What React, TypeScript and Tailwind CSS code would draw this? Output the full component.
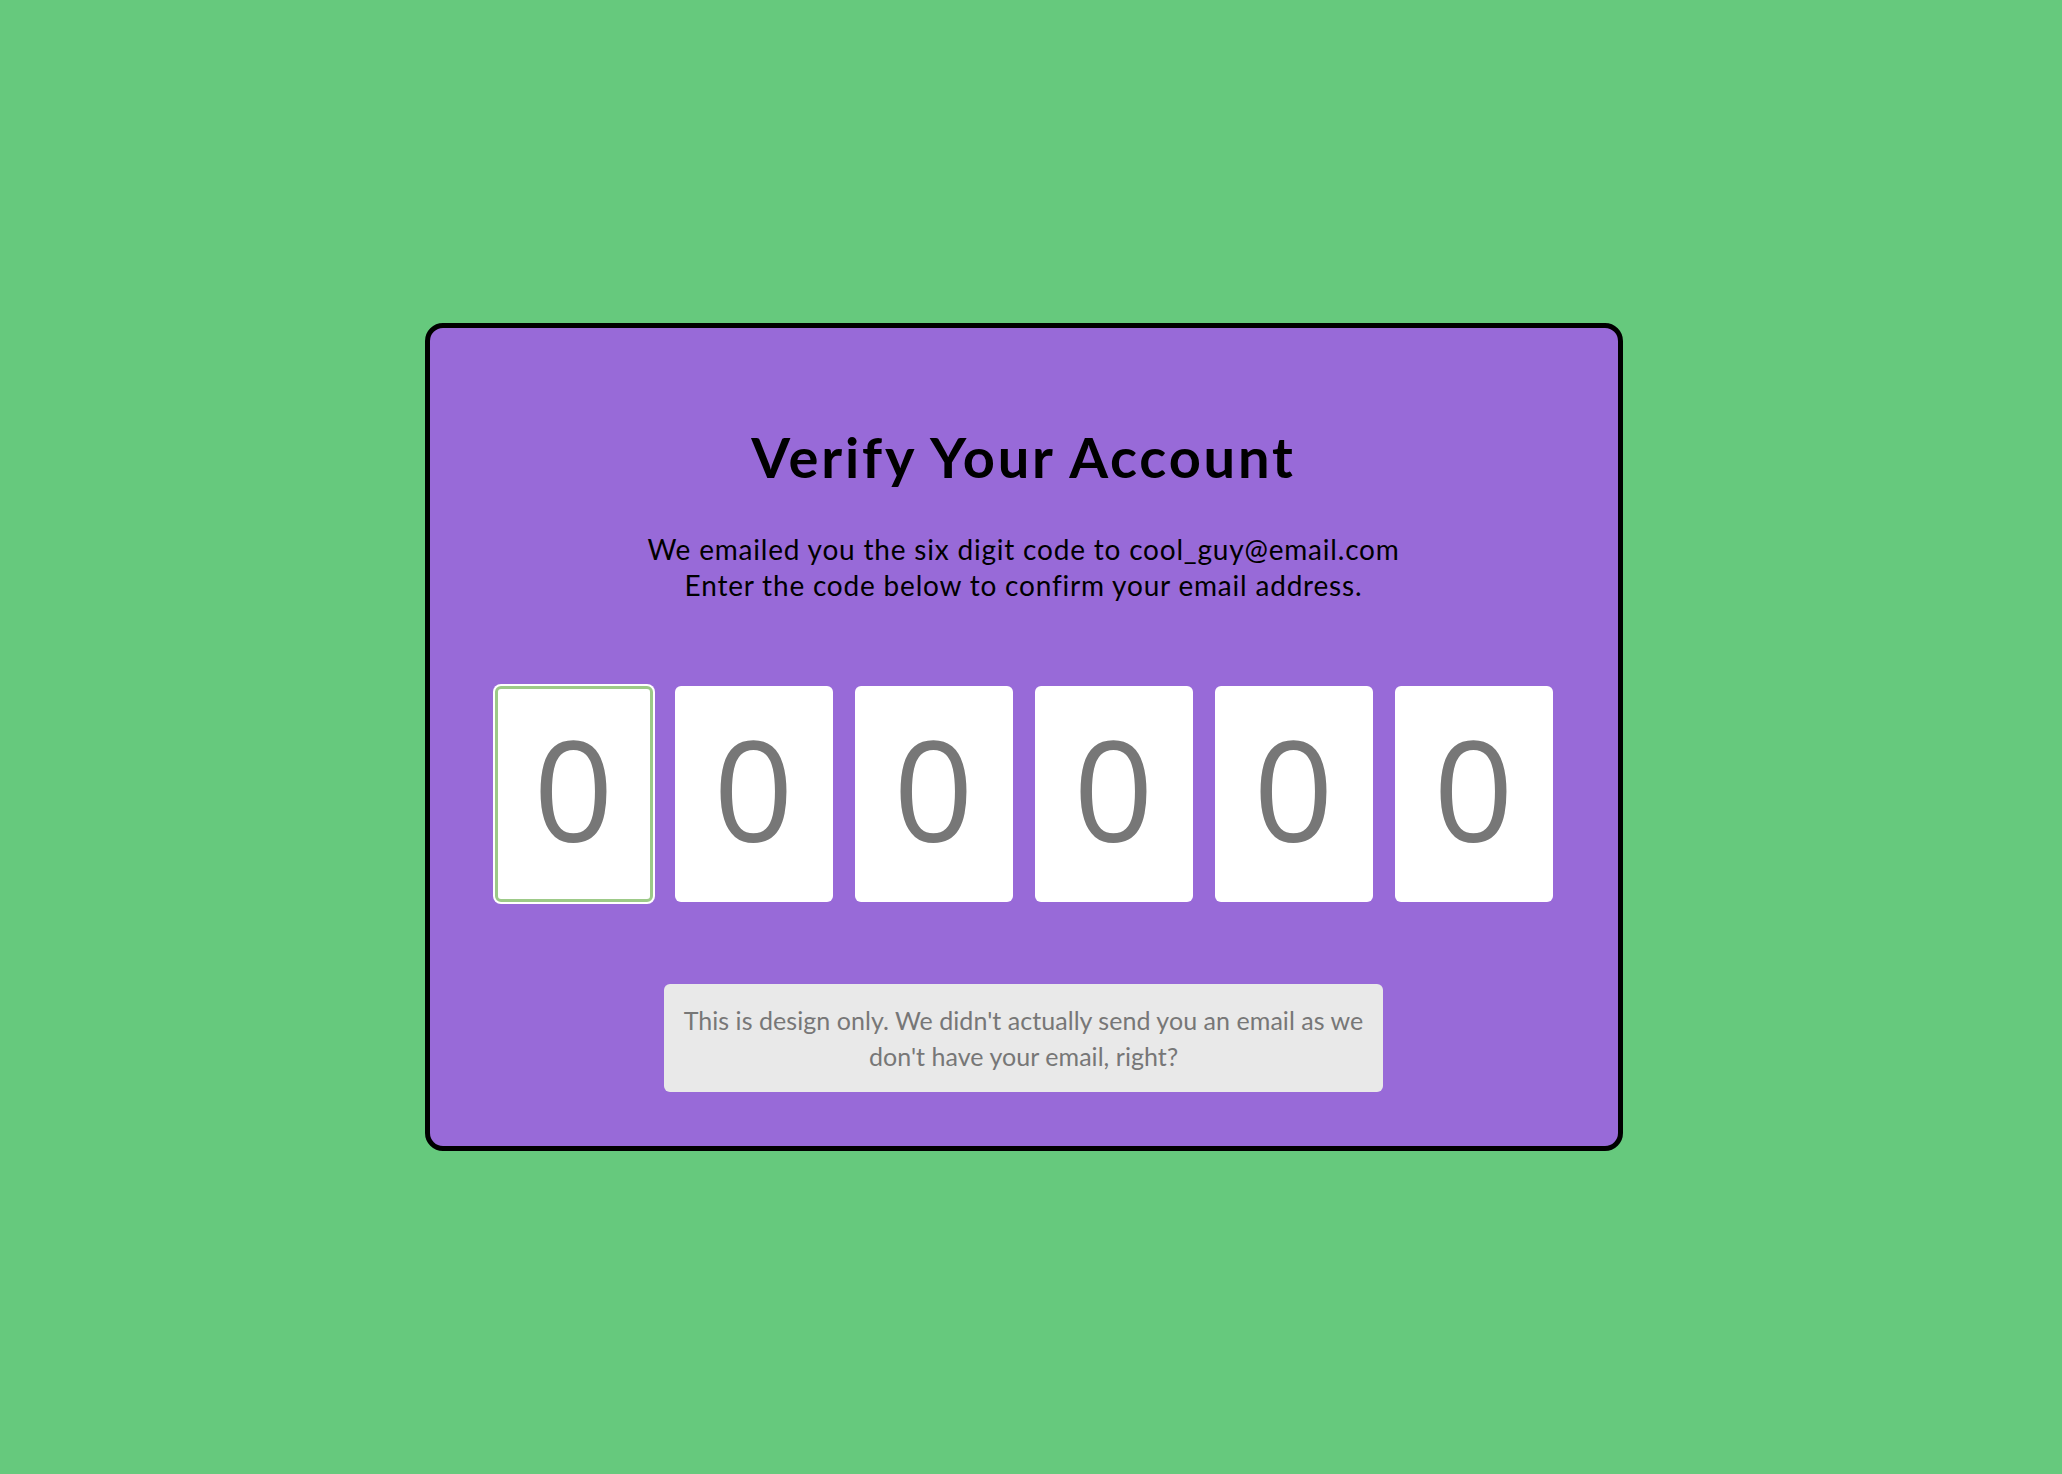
import React from "react";

export default function App() {
  const digits = [0, 1, 2, 3, 4, 5];
  return (
    <div className="min-h-screen w-full bg-[#66c97d] flex items-center justify-center pr-[15px]" style={{ fontFamily: "Lato, 'Noto Sans', sans-serif" }}>
      <div className="w-[1198px] border-[5px] border-black rounded-[18px] bg-[#986ad8] flex flex-col items-center pt-[101px] pb-[54px]">
        <h1 className="text-[56px] leading-[56px] font-bold text-black tracking-[2.8px]" style={{ fontFamily: "Lato, sans-serif" }}>
          Verify Your Account
        </h1>
        <p className="mt-[46px] text-[28px] leading-[36px] text-black text-center tracking-[0.8px]">
          We emailed you the six digit code to cool_guy@email.com
          <br />
          Enter the code below to confirm your email address.
        </p>
        <div className="mt-[83px] flex gap-[22px]">
          {digits.map((i) => (
            <div
              key={i}
              className={
                i === 0
                  ? "w-[158px] h-[216px] bg-white rounded-[6px] border-[3px] border-[#9dca88] shadow-[0_0_0_2px_#ffffff] flex items-center justify-center pb-[12px]"
                  : "w-[158px] h-[216px] bg-white rounded-[6px] flex items-center justify-center pb-[12px]"
              }
            >
              <span className="text-[140px] leading-[140px] text-[#777777]" style={{ fontFamily: "'Open Sans', sans-serif" }}>
                0
              </span>
            </div>
          ))}
        </div>
        <div className="mt-[82px] w-[719px] h-[108px] bg-[#e9e9e9] rounded-[6px] py-[18px] text-center text-[25px] leading-[36px] text-[#777777] tracking-[0.05px]">
          This is design only. We didn't actually send you an email as we
          <br />
          don't have your email, right?
        </div>
      </div>
    </div>
  );
}
